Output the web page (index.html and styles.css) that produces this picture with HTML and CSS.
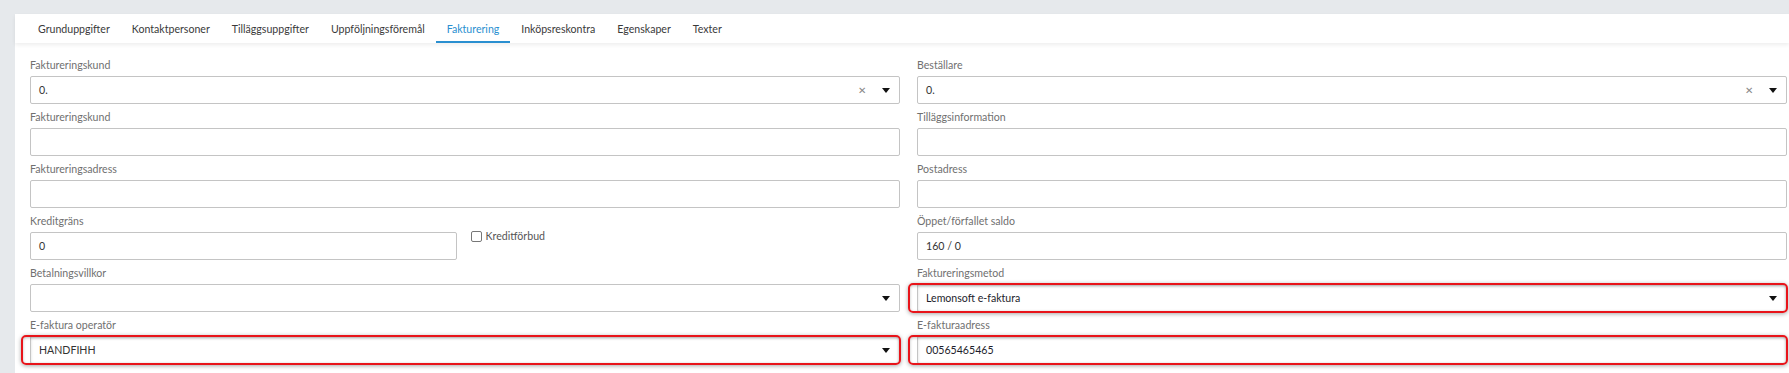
FILE: index.html
```html
<!DOCTYPE html>
<html lang="sv">
<head>
    <meta charset="UTF-8">
    <meta name="viewport" content="width=device-width, initial-scale=1.0">
    <title>Fakturering</title>
    <link rel="stylesheet" href="styles.css">
</head>
<body>

<div class="card">
    <nav class="tabs">
        <a class="tab">Grunduppgifter</a>
        <a class="tab">Kontaktpersoner</a>
        <a class="tab">Tilläggsuppgifter</a>
        <a class="tab">Uppföljningsföremål</a>
        <a class="tab active">Fakturering</a>
        <a class="tab">Inköpsreskontra</a>
        <a class="tab">Egenskaper</a>
        <a class="tab">Texter</a>
    </nav>

    <form class="form">
        <div class="field">
            <label>Faktureringskund</label>
            <div class="box">
                <span class="value">0.</span>
                <span class="clear">&#x2715;</span>
                <span class="caret"></span>
            </div>
        </div>
        <div class="field">
            <label>Beställare</label>
            <div class="box">
                <span class="value">0.</span>
                <span class="clear">&#x2715;</span>
                <span class="caret"></span>
            </div>
        </div>

        <div class="field">
            <label>Faktureringskund</label>
            <div class="box"></div>
        </div>
        <div class="field">
            <label>Tilläggsinformation</label>
            <div class="box"></div>
        </div>

        <div class="field">
            <label>Faktureringsadress</label>
            <div class="box"></div>
        </div>
        <div class="field">
            <label>Postadress</label>
            <div class="box"></div>
        </div>

        <div class="split">
            <div class="field">
                <label>Kreditgräns</label>
                <div class="box"><span class="value">0</span></div>
            </div>
            <div class="check">
                <span class="checkbox"></span>
                <span>Kreditförbud</span>
            </div>
        </div>
        <div class="field">
            <label>Öppet/förfallet saldo</label>
            <div class="box"><span class="value">160 / 0</span></div>
        </div>

        <div class="field">
            <label>Betalningsvillkor</label>
            <div class="box"><span class="value"></span><span class="caret"></span></div>
        </div>
        <div class="field marked">
            <label>Faktureringsmetod</label>
            <div class="box"><span class="value dark">Lemonsoft e-faktura</span><span class="caret"></span></div>
        </div>

        <div class="field marked">
            <label>E-faktura operatör</label>
            <div class="box"><span class="value">HANDFIHH</span><span class="caret"></span></div>
        </div>
        <div class="field marked">
            <label>E-fakturaadress</label>
            <div class="box"><span class="value dark">00565465465</span></div>
        </div>
    </form>
</div>

</body>
</html>
```

FILE: styles.css
```css
body {
    font-family: 'Lato', 'Open Sans', sans-serif;
    background-color: #e6e9ec;
    color: #333;
    margin: 0;
    padding: 14px 0 0 15px;
    height: 359px;
    overflow: hidden;
}

.card {
    background: #ffffff;
    height: 100%;
}

/* Tabs */
.tabs {
    display: flex;
    padding-left: 12px;
    height: 29px;
    box-shadow: 0 2px 4px rgba(0, 0, 0, 0.07);
    position: relative;
}

.tab {
    display: flex;
    align-items: center;
    padding: 0 11px;
    font-size: 10.6px;
    color: #3a3a3a;
    border-bottom: 2px solid transparent;
    margin-top: 2px;
}

.tab.active {
    color: #2a8fd0;
    border-bottom-color: #2a8fd0;
}

/* Form */
.form {
    display: grid;
    grid-template-columns: 1fr 1fr;
    column-gap: 17px;
    padding: 14px 2px 0 15px;
}

.field {
    position: relative;
    margin-bottom: 5px;
}

.field label {
    display: block;
    font-size: 10.6px;
    line-height: 16px;
    color: #707070;
    margin-bottom: 3px;
}

.box {
    display: flex;
    align-items: center;
    height: 26px;
    border: 1px solid #c4c4c4;
    border-radius: 2px;
    padding: 0 9px 0 8px;
    font-size: 10.6px;
    color: #333;
}

.value {
    flex: 1;
}

.value.dark {
    color: #1d1d2b;
}

.clear {
    color: #888;
    font-size: 10px;
    margin-right: 16px;
}

.caret {
    width: 0;
    height: 0;
    border-left: 4px solid transparent;
    border-right: 4px solid transparent;
    border-top: 5px solid #111;
}

/* Credit row */
.split {
    display: grid;
    grid-template-columns: 1fr 1fr;
    column-gap: 17px;
}

.check {
    display: flex;
    align-items: center;
    gap: 4px;
    font-size: 10.6px;
    color: #555;
    padding-top: 17px;
    margin-left: -3px;
    align-self: start;
}

.checkbox {
    width: 9px;
    height: 9px;
    border: 1px solid #777;
    border-radius: 2px;
    background: #fff;
}

/* Red annotation around highlighted fields */
.marked .box {
    box-shadow: inset 0 1px 3px rgba(0, 0, 0, 0.15);
}

.marked::after {
    content: "";
    position: absolute;
    left: -9px;
    right: -1px;
    top: 18px;
    bottom: -1px;
    border: 2px solid #e8141a;
    border-radius: 5px;
    box-shadow: 0 1px 4px rgba(0, 0, 0, 0.35), inset 0 1px 3px rgba(0, 0, 0, 0.25);
    pointer-events: none;
}
```
